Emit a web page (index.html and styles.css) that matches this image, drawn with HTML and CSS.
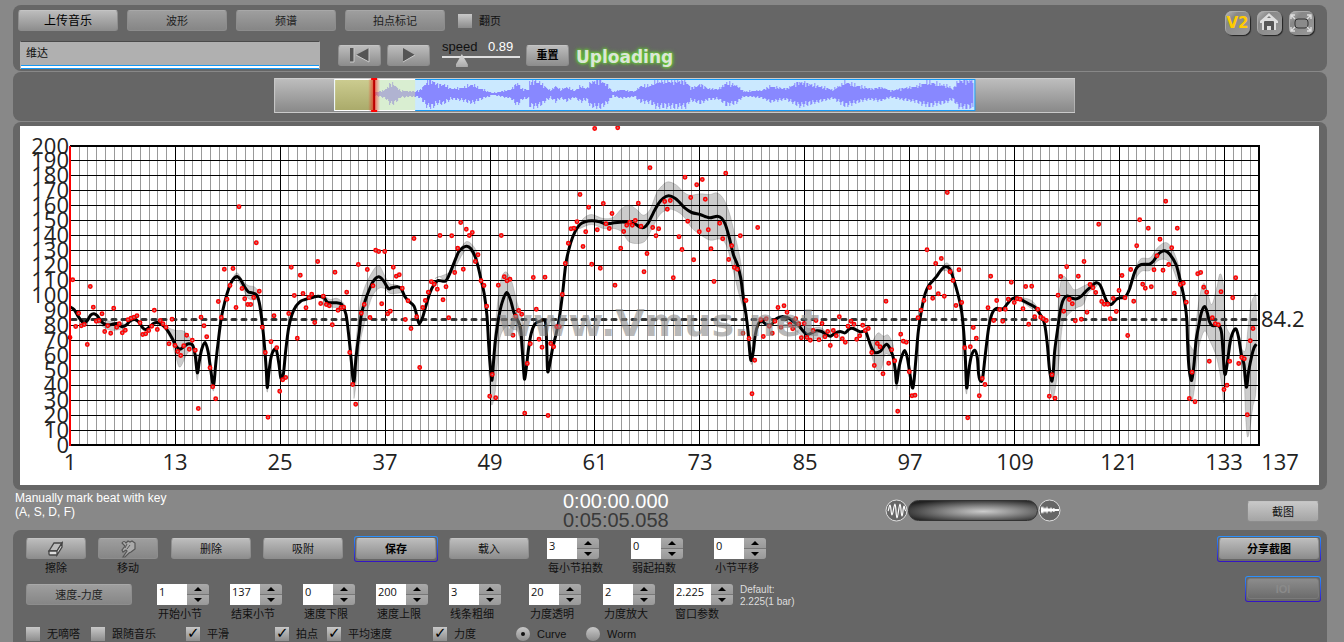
FILE: index.html
```html
<!DOCTYPE html>
<html lang="zh-CN">
<head>
<meta charset="utf-8">
<meta name="viewport" content="width=device-width, initial-scale=1">
<title>Vmus</title>
<link rel="stylesheet" href="styles.css">
</head>
<body>
<header class="panel topbar">
  <div class="topbar-main">
    <div class="tabs">
      <button class="btn btn-tab btn-primary">上传音乐</button>
      <button class="btn btn-tab btn-off">波形</button>
      <button class="btn btn-tab btn-off">频谱</button>
      <button class="btn btn-tab btn-off">拍点标记</button>
      <label class="check check-top"><input type="checkbox">翻页</label>
    </div>
    <div class="transport">
      <input class="track-name" type="text" value="维达" aria-label="曲目">
      <div class="play-buttons">
        <button class="btn btn-small" aria-label="Back to start"><svg width="22" height="17" viewBox="0 0 22 17"><path d="M1 1h4v14H1z" fill="#555"/><path d="M5 1v14H1" fill="none" stroke="#ccc"/><path d="M20 1v14L7 8z" fill="#555"/><path d="M20 1v14L7 8" fill="none" stroke="#ccc"/></svg></button>
        <button class="btn btn-small" aria-label="Play"><svg width="16" height="17" viewBox="0 0 16 17"><path d="M2 1v14l12-7z" fill="#555"/><path d="M2 15l12-7" fill="none" stroke="#ccc"/></svg></button>
      </div>
      <div class="speed">
        <label for="speed">speed</label><output for="speed">0.89</output>
        <input id="speed" type="range" min="0" max="100" value="21">
      </div>
      <button class="btn btn-small btn-bold">重置</button>
      <strong class="status">Uploading</strong>
    </div>
  </div>
  <nav class="tools">
    <a class="tool" href="#v2">V2</a>
    <a class="tool" href="#home" aria-label="Home"><svg width="24" height="24" viewBox="0 0 24 24"><path d="M12 2L3 10v2h2v7h14v-7h2v-2z" fill="#ddd"/><path d="M7 19v-8q0-1 1-1h8q1 0 1 1v8h-3v-4h-4v4z" fill="#555"/><path d="M10 19v-4h4v4z" fill="#ddd"/><path d="M10 7l2-2 2 2z" fill="#777"/></svg></a>
    <a class="tool" href="#full" aria-label="Full screen"><svg width="24" height="24" viewBox="0 0 24 24"><rect x="6" y="8" width="13" height="9" rx="3" fill="#8a8a8a" stroke="#333"/><path d="M2 8V4h4M2 4l4 4M18 4h4v4M22 4l-4 4M2 16v4h4M2 20l4-4M22 16v4h-4M22 20l-4-4" fill="none" stroke="#ddd" stroke-width="1.4"/></svg></a>
  </nav>
</header>

<section class="panel overview">
  <svg class="overview-strip" viewBox="274 78 801 35">
    <defs>
      <linearGradient id="strip" x2="0" y2="1"><stop offset="0" stop-color="#bebebe"/><stop offset="1" stop-color="#888"/></linearGradient>
      <linearGradient id="olive" x2="0" y2="1"><stop offset="0" stop-color="#cccc90"/><stop offset="1" stop-color="#aaaa6a"/></linearGradient>
      <linearGradient id="glow"><stop offset="0" stop-color="#f00" stop-opacity="0"/><stop offset=".5" stop-color="#f00" stop-opacity=".6"/><stop offset="1" stop-color="#f00" stop-opacity="0"/></linearGradient>
    </defs>
    <rect x="274.500" y="78.500" width="800" height="34" fill="url(#strip)" stroke="#ccc"/>
    <rect x="334" y="79" width="641" height="32" fill="#1599f5"/>
    <rect x="335" y="80" width="639" height="30" fill="#cbe9ff"/>
    <path id="wave" fill="#8888ff"/>
    <rect x="374" y="80" width="41" height="30" fill="#eef58c" fill-opacity=".4"/>
    <rect x="334.500" y="79.500" width="40" height="31" fill="url(#olive)"/>
    <path d="M415 79.500H334.500v31H415" fill="none" stroke="#fff"/>
    <rect x="368" y="79" width="12" height="32" fill="url(#glow)"/>
    <path d="M374 79v32" stroke="#b00" stroke-width="2"/>
    <path d="M371 78h6v2h-6zM371 110h6v2h-6z" fill="#f00"/>
  </svg>
</section>

<main class="panel chart-panel">
  <svg class="chart" viewBox="20 126 1299 359" role="img" aria-label="Tempo curve">
    <g id="grid"></g>
    <g id="bands" class="band"></g>
    <path class="average" d="M72 319.500H1258"/>
    <path id="curve" class="curve"/>
    <g id="beats" class="beat"></g>
    <text class="watermark" x="498" y="336">www.Vmus.net</text>
    <path class="cursor" d="M70 146V446"/>
    <g id="labels" class="axis"></g>
  </svg>
</main>

<section class="info">
  <p class="hint">Manually mark beat with key<br>(A, S, D, F)</p>
  <div class="clock"><time>0:00:00.000</time><time class="total">0:05:05.058</time></div>
  <div class="mixer">
    <svg width="23" height="23" viewBox="0 0 23 23"><circle cx="11.500" cy="11.500" r="10.500" fill="#666" stroke="#ddd"/><path d="M3 12c1-1 1-6 2-6s1 10 2 10S9 5 10 5s1 14 2 14S14 5 15 5s1 12 2 12 1-10 2-10 0 4 2 5" fill="none" stroke="#fff" stroke-width="1.200"/></svg>
    <input class="mix" type="range" aria-label="Mix">
    <svg width="23" height="23" viewBox="0 0 23 23"><circle cx="11.500" cy="11.500" r="10.500" fill="#666" stroke="#ddd"/><path d="M3 7l1 2 1-2 1 3 1-2 1 2 1-3 1 3 1-1 1 1 1-2 1 2 2-1 1 1h4v2h-4l-1 1-2-1-1 2-1-2-1 1-1-1-1 3-1-3-1 2-1-2-1 3-1-2-1 2z" fill="#fff"/></svg>
  </div>
  <button class="btn btn-light">截图</button>
</section>

<footer class="panel controls">
  <div class="control-rows">
    <div class="row row-actions">
      <div class="captioned"><button class="btn" id="erase" aria-label="擦除"><svg width="18" height="16" viewBox="0 0 18 16"><path d="M7 2h8l-5 8H2z" fill="#bbb" stroke="#444" stroke-width="1.300"/><path d="M2 10h8v4H3q-1 0-1-1zM10 10l5-8v4l-5 8z" fill="#ddd" stroke="#444" stroke-width="1.300"/></svg></button><label for="erase">擦除</label></div>
      <div class="captioned"><button class="btn btn-off" id="move" aria-label="移动"><svg width="18" height="18" viewBox="0 0 18 18"><path d="M3 3q2-3 4 0l2-2 2 1 2-1 3 2v6l-4 3-2 1-4 4H4l4-6-1-1-3 2-1-2 3-4z" fill="#aaa" stroke="#555" stroke-width="1.200"/><path d="M8 4l-2 4M11 5L8 9" stroke="#555"/></svg></button><label for="move">移动</label></div>
      <button class="btn btn-wide">删除</button>
      <button class="btn btn-wide">吸附</button>
      <span class="ring ring-save"><button class="btn btn-bold">保存</button></span>
      <button class="btn btn-wide">载入</button>
      <div class="field"><span class="spin"><input id="f1" value="3"><span class="steps"><button aria-label="+"></button><button aria-label="-"></button></span></span><label for="f1">每小节拍数</label></div>
      <div class="field"><span class="spin"><input id="f2" value="0"><span class="steps"><button aria-label="+"></button><button aria-label="-"></button></span></span><label for="f2">弱起拍数</label></div>
      <div class="field"><span class="spin"><input id="f3" value="0"><span class="steps"><button aria-label="+"></button><button aria-label="-"></button></span></span><label for="f3">小节平移</label></div>
    </div>
    <div class="row row-params">
      <button class="btn btn-mode btn-off">速度-力度</button>
      <div class="field"><span class="spin"><input id="f4" value="1"><span class="steps"><button aria-label="+"></button><button aria-label="-"></button></span></span><label for="f4">开始小节</label></div>
      <div class="field"><span class="spin"><input id="f5" value="137"><span class="steps"><button aria-label="+"></button><button aria-label="-"></button></span></span><label for="f5">结束小节</label></div>
      <div class="field"><span class="spin"><input id="f6" value="0"><span class="steps"><button aria-label="+"></button><button aria-label="-"></button></span></span><label for="f6">速度下限</label></div>
      <div class="field"><span class="spin"><input id="f7" value="200"><span class="steps"><button aria-label="+"></button><button aria-label="-"></button></span></span><label for="f7">速度上限</label></div>
      <div class="field"><span class="spin"><input id="f8" value="3"><span class="steps"><button aria-label="+"></button><button aria-label="-"></button></span></span><label for="f8">线条粗细</label></div>
      <div class="field"><span class="spin"><input id="f9" value="20"><span class="steps"><button aria-label="+"></button><button aria-label="-"></button></span></span><label for="f9">力度透明</label></div>
      <div class="field"><span class="spin"><input id="f10" value="2"><span class="steps"><button aria-label="+"></button><button aria-label="-"></button></span></span><label for="f10">力度放大</label></div>
      <div class="field"><span class="spin spin-long"><input id="f11" value="2.225"><span class="steps"><button aria-label="+"></button><button aria-label="-"></button></span></span><label for="f11">窗口参数</label></div>
      <p class="default">Default:<br>2.225(1 bar)</p>
    </div>
    <div class="row row-options">
      <label class="check"><input type="checkbox">无嘀嗒</label>
      <label class="check"><input type="checkbox">跟随音乐</label>
      <label class="check"><input type="checkbox" checked>平滑</label>
      <label class="check"><input type="checkbox" checked>拍点</label>
      <label class="check"><input type="checkbox" checked>平均速度</label>
      <label class="check"><input type="checkbox" checked>力度</label>
      <label class="check"><input type="radio" name="view" checked>Curve</label>
      <label class="check"><input type="radio" name="view">Worm</label>
    </div>
  </div>
  <div class="side">
    <span class="ring ring-share"><button class="btn btn-bold">分享截图</button></span>
    <span class="ring ring-ioi"><button class="btn btn-dim" disabled>IOI</button></span>
  </div>
</footer>
<script src="chart.js"></script>
</body>
</html>
```

FILE: styles.css
```css
* { box-sizing: border-box; }
body {
  margin: 0;
  padding-top: 5px;
  min-height: 100vh;
  display: flex;
  flex-direction: column;
  background: #888;
  color: #111;
  font: 11px/14px "Liberation Sans", "Noto Sans CJK SC", sans-serif;
}
p { margin: 0; }
svg { display: block; }
button, input { font: inherit; color: inherit; margin: 0; }
.panel { margin: 0 17px 1px 13px; background: #666; border-radius: 8px; }

.btn {
  height: 21px;
  padding: 0;
  border: 1px solid #8d8d8d;
  border-top-color: #c4c4c4;
  border-radius: 3px;
  background: linear-gradient(#bcbcbc, #8e8e8e);
  display: flex;
  align-items: center;
  justify-content: center;
  line-height: 14px;
}
.btn-off { background: linear-gradient(#9e9e9e, #868686); border-top-color: #a8a8a8; color: #222; }
.btn-light { background: linear-gradient(#c8c8c8, #a4a4a4); }
.btn-dim { background: linear-gradient(#8c8c8c, #6c6c6c); border-color: #7a7a7a; color: #8a8a8a; font-weight: bold; }
.btn-tab { width: 100px; }
.btn-primary { font-size: 12px; color: #000; }
.btn-small { width: 43px; }
.btn-wide { width: 80px; }
.btn-mode { width: 106px; }
.btn-bold { font-weight: bold; color: #000; }

.check { display: flex; align-items: center; gap: 7px; white-space: nowrap; }
.check input {
  appearance: none;
  position: relative;
  width: 14px;
  height: 14px;
  flex: none;
  background: linear-gradient(#c8c8c8, #8c8c8c);
}
.check input[type="radio"] { border-radius: 50%; }
.check input[type="checkbox"]:checked::after {
  content: "✓";
  position: absolute;
  left: 1px;
  top: -1px;
  font: bold 15px/14px "DejaVu Sans", sans-serif;
  color: #000;
}
.check input[type="radio"]:checked::after {
  content: "";
  position: absolute;
  inset: 5px;
  border-radius: 50%;
  background: #111;
}

.topbar { display: flex; justify-content: space-between; height: 66px; padding: 5px 13px 0 5px; }
.tabs { display: flex; gap: 9px; }
.check-top { margin-left: 4px; }
.transport { display: flex; align-items: center; gap: 6px; padding: 8px 0 0 2px; }
.track-name {
  width: 300px;
  height: 28px;
  margin-right: 12px;
  padding: 0 5px 8px;
  border: 1px solid #b0b0b0;
  border-top-color: #4a4a4a;
  border-bottom: 0;
  background: linear-gradient(#1599f5, #1599f5) 0 100% / 100% 1px no-repeat,
    linear-gradient(#fff, #fff) 0 100% / 100% 3px no-repeat,
    linear-gradient(#1599f5, #1599f5) 0 100% / 100% 4px no-repeat, #b0b0b0;
}
.play-buttons { display: flex; gap: 6px; }
.speed { display: grid; grid-template-columns: 46px 1fr; width: 78px; margin-left: 6px; padding-bottom: 4px; font-size: 13px; line-height: 15px; }
.speed output { color: #fff; }
.speed input {
  grid-column: 1 / 3;
  appearance: none;
  width: 100%;
  height: 13px;
  background: linear-gradient(#e0e0e0, #e0e0e0) 0 2px / 100% 2px no-repeat;
}
.speed input::-webkit-slider-thumb {
  appearance: none;
  width: 12px;
  height: 13px;
  background: linear-gradient(#ddd, #aaa);
  clip-path: polygon(50% 0, 100% 80%, 100% 100%, 0 100%, 0 80%);
}
.status {
  padding: 3px 0 0 1px;
  font: bold 17px/20px "DejaVu Sans", sans-serif;
  color: #dbe6d6;
  text-shadow: 0 0 3px #6c3, 0 0 3px #6c3, 0 0 5px #6c3;
}
.tools { display: flex; gap: 7px; align-items: flex-start; padding-top: 1px; }
.tool {
  width: 25px;
  height: 24px;
  border-radius: 7px;
  background: linear-gradient(135deg, #bbb, #888 30%, #999);
  box-shadow: inset 1px 1px 0 #aaa, 1px 1px 1px #222;
  color: #fc0;
  font: bold 15px/24px "DejaVu Sans", sans-serif;
  text-align: center;
  text-decoration: none;
}

.overview { padding: 6px 0 8px; }
.overview-strip { width: 61%; margin-left: 19.85%; }

.chart-panel { padding: 4px 8px 5px 7px; margin-bottom: 0; }
.chart { width: 100%; background: #fff; }
.minor { stroke: #999; }
.major { stroke: #000; }
.frame { fill: none; stroke: #000; stroke-width: 2px; }
.cursor { stroke: #f00; stroke-width: 2px; }
.axis { font-family: "Open Sans", sans-serif; font-size: 22px; fill: #222; }
.left { text-anchor: end; }
.mid { text-anchor: middle; }
.band { fill: #000; fill-opacity: .2; stroke: #000; stroke-opacity: .15; }
.average { stroke: #333; stroke-width: 3px; stroke-dasharray: 4 6; stroke-linecap: round; }
.curve { fill: none; stroke: #000; stroke-width: 3px; stroke-linejoin: round; }
.beat { fill: #b77; stroke: #f00; stroke-width: 1.5px; }
.watermark { font: bold 38px "DejaVu Sans", sans-serif; fill: #888; fill-opacity: .6; }

.info {
  display: grid;
  grid-template-columns: 548fr 322fr 362fr 72fr;
  height: 40px;
  padding: 0 25px 0 15px;
}
.hint { color: #fff; font-size: 12px; padding-top: 1px; }
.clock { font-size: 20px; line-height: 19px; color: #fff; padding-top: 2px; }
.clock time { display: block; }
.clock .total { color: #3a3a3a; }
.mixer { display: flex; align-items: center; }
.mix {
  appearance: none;
  width: 130px;
  height: 21px;
  border: 1px solid #333;
  border-radius: 11px;
  background: radial-gradient(ellipse at 58% 55%, #ccc, #888 35%, #222 85%);
}
.mix::-webkit-slider-thumb { appearance: none; width: 1px; height: 1px; }
.info .btn { margin-top: 11px; }

.controls {
  flex: 1;
  display: flex;
  justify-content: space-between;
  margin-bottom: 0;
  padding: 6px 6px 0 13px;
  border-radius: 8px 8px 0 0;
}
.control-rows { padding-top: 2px; }
.row { display: grid; align-items: start; }
.row-actions { grid-template-columns: 72px 73px 92px 91px 95px 98px 84px 83px 83px; height: 46px; }
.row-params { grid-template-columns: 131px repeat(4, 73px) 80px 74px 71px 66px 80px; height: 43px; }
.row-options { grid-template-columns: 65px 95px 89px 52px 106px 83px 70px 80px; }
.captioned { width: 60px; text-align: center; }
.captioned .btn { width: 60px; }
.captioned label, .field label { display: block; padding-top: 2px; white-space: nowrap; }
.field label { padding-left: 1px; }
.spin { display: flex; width: 52px; height: 21px; }
.spin-long { width: 59px; }
.spin input {
  flex: 1;
  min-width: 0;
  padding: 0 0 5px 2px;
  border: 0;
  background: #fff;
  font: 11px/14px "Open Sans", sans-serif;
}
.steps { width: 22px; display: grid; gap: 1px; background: #777; border-radius: 0 3px 3px 0; overflow: hidden; }
.steps button {
  display: grid;
  place-items: center;
  padding: 0;
  border: 0;
  background: linear-gradient(#aaa, #999);
}
.steps button::before { content: ""; width: 8px; height: 4px; background: #000; clip-path: polygon(50% 0, 100% 100%, 0 100%); }
.steps button:last-child::before { clip-path: polygon(0 0, 100% 0, 50% 100%); }
.default { color: #ddd; font-size: 10px; line-height: 12px; white-space: nowrap; }

.ring {
  display: block;
  padding: 1px 1px 2px;
  border: 1px solid transparent;
  border-radius: 3px;
  background: linear-gradient(#666, #666) padding-box, linear-gradient(#2b93ff, #3313c4) border-box;
}
.ring .btn { width: 100%; }
.ring-save { width: 84px; margin-top: -2px; }
.side { display: flex; flex-direction: column; align-items: flex-end; gap: 14px; }
.ring-share { width: 104px; }
.ring-ioi { width: 76px; }
```

FILE: chart.js
```js
const NS = "http://www.w3.org/2000/svg";
const get = id => document.getElementById(id);

function add(parent, tag, attrs, text) {
  const el = document.createElementNS(NS, tag);
  for (const key in attrs) el.setAttribute(key, attrs[key]);
  if (text !== undefined) el.textContent = text;
  parent.appendChild(el);
}

// Samples are stored in thirds of a unit, counted from the start of each section.
function read(start, list) {
  return list.trim().split(/\s+/).map(pair => {
    const [x, y] = pair.split(",").map(Number);
    return [start + x / 3, 124.5 + y / 3];
  });
}

function smooth(p) {
  let d = "M" + p[0];
  for (let i = 0; i < p.length - 1; i++) {
    const a = p[i - 1] || p[i], b = p[i], c = p[i + 1], e = p[i + 2] || c;
    d += "C" + [b[0] + (c[0] - a[0]) / 6, b[1] + (c[1] - a[1]) / 6,
      c[0] - (e[0] - b[0]) / 6, c[1] - (e[1] - b[1]) / 6, c[0], c[1]].map(v => v.toFixed(2)).join(" ");
  }
  return d;
}

const beats = [
  [10, "180,639 188,466 197,606 206,566 214,604 223,600 232,660 241,486 250,548 259,590 267,588 276,568 284,621 293,604 302,626 311,551 320,608 328,598 337,625 346,617 354,586 363,581 372,578 381,574 390,595 398,630 407,628 416,618 425,605 433,557 442,615 451,588 459,598 468,608 477,658 486,584 495,663 503,681 512,693 521,664 530,632 538,674 547,647 556,677 565,852 573,578 582,604 590,637 600,730 608,787 617,823 625,531 634,579 643,434 651,524 660,483 669,432 678,549 687,247 696,492 704,523 713,540 722,540 731,519 739,355 748,500 757,608 766,684 774,878 783,652 792,574 800,670 809,800 818,766 827,759 836,567 844,428 853,513 862,641 871,452 879,507 888,550 897,519"],
  [310, "5,509 14,594 23,411 32,537 40,515 49,540 58,544 67,601 75,443 84,557 93,549 101,548 110,503 119,684 128,780 137,839 145,420 154,566 163,540 172,435 180,579 189,484 197,377 206,381 215,538 224,381 233,568 241,560 250,428 259,455 268,451 277,491 286,585 294,529 303,612 312,342 320,577 329,729 338,549 346,528 355,503 364,472 373,479 382,494 390,333 399,526 408,487 416,580 425,334 434,444 443,371 452,294 460,434 469,314 478,333 487,324 496,411 504,391 513,469 522,483 530,545 539,815 547,750 557,820 565,482 574,333 583,457 591,469 600,464 609,632 617,575 626,558 635,569 644,866 652,717 661,658 670,459 679,554 687,644 696,668 705,458 714,873 722,657 731,667 740,607 748,607 757,510"],
  [560, "16,417 25,356 33,313 42,311 51,292 60,210 69,366 77,322 86,248 95,419 104,12 112,316 121,431 130,237 138,298 148,312 156,267 165,482 173,10 182,371 191,321 200,302 209,293 217,302 226,288 235,236 243,305 252,442 261,387 270,130 278,309 288,334 296,313 314,231 322,254 331,228 340,460 357,337 366,375 375,158 383,290 392,219 401,406 410,181 418,322 427,165 436,224 445,316 453,373 462,471 479,296 488,343 497,146 506,405 515,364 523,429 532,434 541,334 549,626 558,528 567,642 576,808 584,707 593,309 602,586 610,636 619,583 628,605 637,626 645,590 654,549 663,608 672,544 681,563 690,600 698,613 707,583 716,598 724,640 733,597 741,639 751,647 759,618 768,588 777,646 786,597 795,637 803,621 811,663 820,618 829,634 838,577 847,643 856,653 864,605 873,590 882,599 890,644 899,634"],
  [850, "38,602 46,618 55,612 65,684 73,723 82,657 90,667 99,748 108,530 116,716 125,676 134,709 143,860 152,629 160,650 169,653 178,742 186,814 195,812 204,580 213,557 222,528 231,376 239,489 248,521 257,417 265,508 274,402 283,515 292,204 300,442 309,468 318,543 327,436 335,534 344,670 353,880 361,667 370,609 379,641 388,814 397,762 405,780 414,550 422,455 431,588 440,528 449,555 458,590 466,554 475,524 484,473 493,534 502,523 510,524 519,553 527,486 536,599 545,485 554,577 563,554 572,578 580,583 589,588 598,815 606,751 615,821 624,512 632,456 641,560 650,427 658,525 667,538 685,455"],
  [1070, "16,589 34,584 42,411 51,563 60,480 69,490 77,504 86,299 95,531 103,539 113,539 121,583 130,522 139,561 147,498 156,453 165,520 173,633 182,435 191,530 200,364 209,286 218,479 226,491 235,311 244,487 252,436 261,394 270,344 279,437 287,230 296,420 305,370 313,506 322,311 331,480 340,476 349,533 358,822 366,743 375,832 383,448 392,444 401,488 410,503 418,710 427,580 436,598 445,601 453,502 462,795 471,782 479,710 488,520 497,460 506,717 515,699 523,703 532,871 541,649 549,612"]
];

const curve = [
  [10, "180,547 192,555 204,575 215,590 222,596 232,588 242,572 252,568 262,574 275,592 290,601 305,600 320,597 335,606 348,602 360,590 374,585 388,594 398,610 408,615 420,606 430,597 442,594 455,600 468,612 480,630 490,648 498,665 510,674 522,666 535,658 548,662 556,695 562,745 568,710 575,675 585,654 594,680 600,720 608,775 612,775 618,710 626,640 634,580 645,530 657,490 668,466 681,456 692,466 703,486 715,502 727,505 740,512 748,535 756,590 764,670 769,740 772,790 777,740 784,695 794,674 800,680 807,720 813,762 820,750 827,680 836,610 846,570 858,545 872,530 885,525 900,521"],
  [310, "10,518 25,515 42,520 52,533 65,535 80,535 95,540 108,570 117,640 124,710 129,765 133,765 138,700 148,620 154,570 165,530 178,495 190,470 206,457 220,468 235,492 245,490 262,487 274,493 284,515 296,530 312,545 322,580 328,598 338,578 346,550 360,505 372,480 384,468 406,470 418,450 432,415 446,382 458,370 470,365 482,372 494,393 504,425 513,465 523,510 531,575 536,660 541,730 546,767 550,720 556,650 566,580 576,535 590,504 602,528 612,565 622,585 632,615 637,680 641,740 644,764 649,730 656,670 664,625 675,598 690,590 706,592 710,660 713,740 720,715 728,670 738,630 748,580 758,505"],
  [560, "18,415 32,355 46,320 60,300 75,292 95,289 115,291 138,298 155,296 180,293 210,294 225,298 240,308 252,309 265,295 280,265 295,238 310,221 326,214 345,221 360,235 375,251 395,264 420,270 435,276 450,280 472,275 485,281 496,300 508,340 520,390 532,420 542,460 550,520 558,570 564,620 570,690 574,708 580,680 586,630 595,598 605,590 620,600 634,600 650,582 668,576 685,580 700,592 715,602 730,620 742,630 756,625 770,619 785,621 800,631 812,635 825,626 840,621 855,625 868,613 880,612 900,622"],
  [850, "46,620 54,640 64,668 74,684 90,681 100,668 110,659 120,672 130,700 136,740 140,776 146,735 154,700 164,678 172,700 180,750 187,790 192,770 198,700 205,620 214,560 222,520 230,495 240,478 258,458 272,438 286,426 300,435 312,468 324,510 334,555 341,620 346,700 350,790 356,740 364,695 374,677 382,700 386,750 392,770 398,760 406,690 416,610 426,568 438,552 458,553 472,538 484,524 500,520 515,526 535,537 555,548 572,572 584,600 592,660 598,730 605,770 610,740 614,680 622,620 630,565 638,530 650,515 665,521 680,523 694,515 710,498 725,485 738,475 750,481"],
  [1070, "100,505 110,530 124,540 138,525 150,520 165,518 178,495 190,455 200,430 214,420 238,419 250,410 262,392 275,381 286,379 300,390 318,420 330,465 342,520 350,580 353,660 357,730 365,768 372,720 378,650 385,610 394,565 404,546 412,565 418,590 426,603 445,603 454,620 459,680 463,740 467,746 474,700 480,655 488,625 498,613 506,640 514,690 522,720 529,788 536,740 545,695 552,670 559,659"]
];

const bands = [
  [10, "258,580 300,590 340,598 340,612 300,617 265,598"],
  [10, "460,600 480,612 500,618 525,622 550,660 530,690 510,728 498,700 485,650"],
  [10, "553,690 562,768 570,690"],
  [10, "604,760 610,800 617,750"],
  [10, "665,466 681,445 700,470 715,483 735,488 748,510 740,525 715,522 700,495 681,462"],
  [10, "767,750 772,803 780,730"],
  [310, "28,513 42,513 60,525 80,521 100,535 100,548 60,547 42,530"],
  [310, "130,750 145,580 160,500 185,445 206,423 225,455 240,478 262,483 280,505 275,505 240,507 225,493 206,492 185,520 165,590 150,660 138,780 132,822"],
  [310, "375,462 388,456 408,463 440,395 470,351 500,380 500,410 470,375 430,440"],
  [310, "536,740 544,840 556,800 562,720 570,640 590,605 610,615 625,625 640,700 640,600 620,530 605,470 587,442 572,470 560,560 548,700"],
  [560, "50,312 70,282 95,270 130,282 160,278 185,252 208,242 230,255 250,272 270,255 290,205 310,180 326,172 350,182 370,202 390,212 420,208 450,210 470,205 490,222 508,265 522,320 540,400 552,490 556,560 540,520 520,440 500,365 480,344 450,347 420,330 395,310 370,275 345,258 326,255 300,270 275,315 255,350 230,357 205,350 185,322 160,312 130,312 95,300 60,312"],
  [560, "565,650 574,720 580,680"],
  [560, "655,580 690,580 720,590 745,612 780,608 800,628 780,640 745,645 715,625 690,600"],
  [850, "52,640 66,650 84,625 100,635 115,632 130,665 120,690 105,690 95,730 84,740 70,712"],
  [850, "134,750 140,796 147,745"],
  [850, "345,780 350,808 357,740"],
  [850, "270,440 290,415 310,440 310,455 290,438"],
  [850, "495,517 520,520 545,528 562,550 550,555 520,535"],
  [850, "598,770 608,820 618,780 628,700 638,600 655,570 680,550 700,540 715,505 740,485 740,470 710,480 675,496 660,480 640,455 628,500 620,620 608,740"],
  [1070, "186,460 210,405 240,400 262,370 286,354 305,370 325,420 335,480 330,490 305,425 286,405 262,410 240,438 215,440 195,465"],
  [1070, "352,650 360,800 366,830 375,780 385,680 403,620 420,650 440,700 455,780 461,835 466,760 478,690 485,640 468,600 460,480 450,448 440,490 425,540 412,500 401,476 390,510 380,580 372,680"],
  [1070, "505,650 525,680 535,600 543,540 551,518 559,530 559,780 548,850 540,910 532,936 526,860 522,760 510,690"]
];

const barX = bar => 70.4 + (bar - 1) * 8.742;
const grid = get("grid"), labels = get("labels");

for (let bar = 2; bar < 137; bar++) {
  const x = Math.floor(barX(bar)) + 0.5;
  add(grid, "path", { class: bar % 12 === 1 ? "major" : "minor", d: `M${x} 146V445` });
}
for (let v = 0; v <= 200; v += 10) {
  const y = Math.floor(445 - v * 1.495) + 0.5;
  if (v > 0 && v < 200) add(grid, "path", { class: "major", d: `M70 ${y}H1259` });
  add(labels, "text", { class: "left", x: 69, y: Math.floor(y + 8) }, v);
}
add(grid, "path", { class: "frame", d: "M70 146H1259V445H70" });
for (let bar = 1; bar <= 133; bar += 12) {
  add(labels, "text", { class: "mid", x: Math.round(barX(bar)), y: 470 }, bar);
}
add(labels, "text", { class: "mid", x: 1280, y: 470 }, 137);
add(labels, "text", { x: 1261, y: 327 }, "84.2");

for (const [start, list] of bands) add(get("bands"), "path", { d: smooth(read(start, list)) + "Z" });
get("curve").setAttribute("d", smooth(curve.flatMap(([start, list]) => read(start, list))));
for (const [start, list] of beats) {
  for (const [x, y] of read(start, list)) {
    add(get("beats"), "circle", { cx: x.toFixed(1), cy: y.toFixed(1), r: 1.7 });
  }
}

// Loudness envelope of the recording: position, half height.
const envelope = [[375, 2], [385, 5], [390, 12], [394, 11], [400, 4], [415, 3], [420, 5], [427, 15], [432, 15], [437, 11], [443, 11], [450, 6], [460, 7], [472, 11], [478, 7], [488, 3], [492, 1], [500, 3], [510, 5], [517, 13], [521, 6], [528, 5], [529, 14], [535, 15], [540, 13], [545, 8], [550, 4], [555, 9], [560, 5], [566, 8], [574, 4], [580, 9], [586, 6], [590, 14], [600, 16], [607, 10], [612, 2], [620, 5], [634, 3], [640, 9], [650, 10], [655, 15], [685, 15], [690, 7], [700, 11], [708, 6], [718, 6], [726, 13], [736, 10], [743, 3], [760, 4], [770, 9], [785, 6], [798, 14], [815, 10], [832, 5], [845, 14], [855, 10], [870, 6], [880, 8], [890, 4], [900, 6], [915, 9], [927, 14], [945, 10], [952, 6], [958, 16], [973, 16]];
let wave = "", k = 0;
for (let x = 375; x < 973; x++) {
  while (envelope[k + 1][0] < x) k++;
  const [x0, a0] = envelope[k], [x1, a1] = envelope[k + 1];
  const level = a0 + (a1 - a0) * (x - x0) / (x1 - x0);
  const up = Math.min(14, Math.max(1, Math.round(level * (0.82 + 0.25 * Math.sin(x * 12.9) * Math.sin(x * 4.1)))));
  const down = Math.min(15, Math.max(1, Math.round(level * (0.8 + 0.22 * Math.sin(x * 1.7)))));
  wave += `M${x} ${94 - up}h1v${up + down}h-1z`;
}
get("wave").setAttribute("d", wave);
```
